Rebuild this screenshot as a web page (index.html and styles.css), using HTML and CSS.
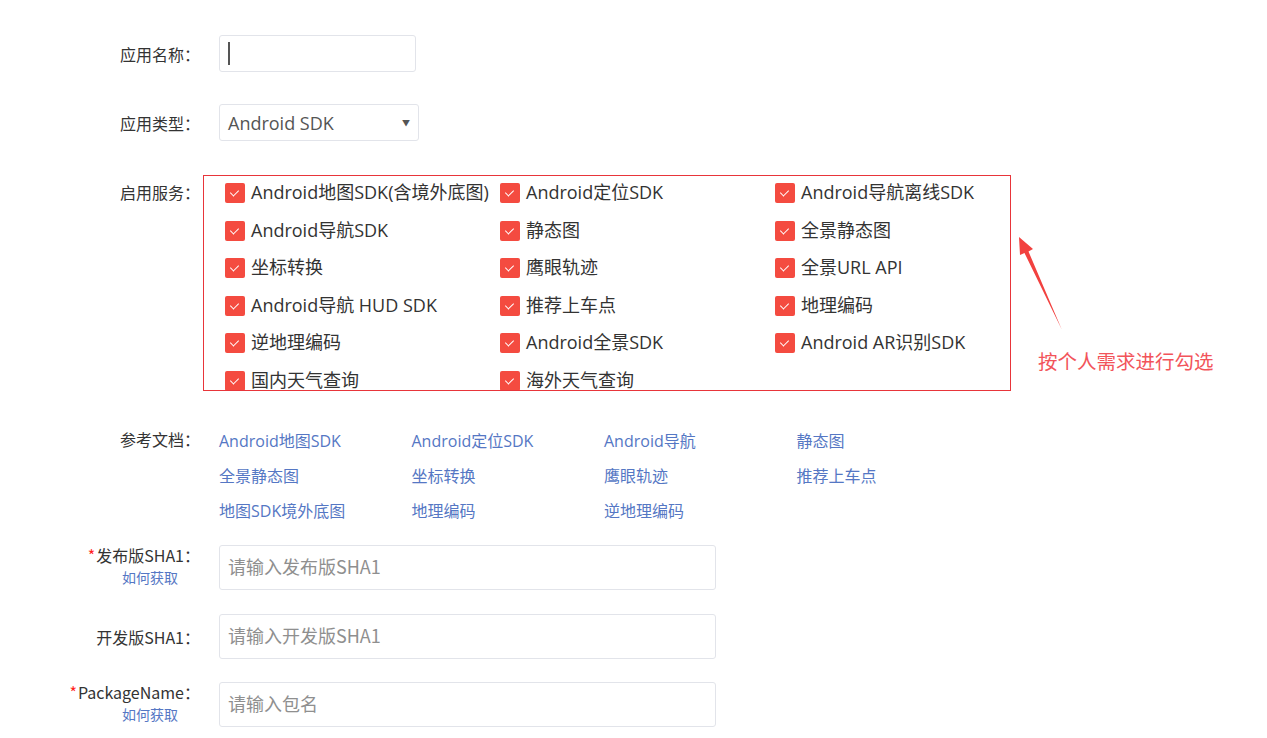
FILE: index.html
```html
<!DOCTYPE html>
<html lang="zh-CN">
<head>
<meta charset="utf-8">
<title>创建应用</title>
<link rel="stylesheet" href="styles.css">
</head>
<body>
<div class="page">
  <form class="form">
    <div class="row row-name">
      <label class="label">应用名称：</label>
      <div class="input input-name"><span class="caret"></span></div>
    </div>

    <div class="row row-type">
      <label class="label">应用类型：</label>
      <div class="select"><span class="select-text">Android SDK</span><span class="select-arrow">▼</span></div>
    </div>

    <div class="row row-services">
      <label class="label label-top">启用服务：</label>
      <div class="services">
        <div class="check"><span class="box"></span><span class="check-text">Android地图SDK(含境外底图)</span></div>
        <div class="check"><span class="box"></span><span class="check-text">Android定位SDK</span></div>
        <div class="check"><span class="box"></span><span class="check-text">Android导航离线SDK</span></div>
        <div class="check"><span class="box"></span><span class="check-text">Android导航SDK</span></div>
        <div class="check"><span class="box"></span><span class="check-text">静态图</span></div>
        <div class="check"><span class="box"></span><span class="check-text">全景静态图</span></div>
        <div class="check"><span class="box"></span><span class="check-text">坐标转换</span></div>
        <div class="check"><span class="box"></span><span class="check-text">鹰眼轨迹</span></div>
        <div class="check"><span class="box"></span><span class="check-text">全景URL API</span></div>
        <div class="check"><span class="box"></span><span class="check-text">Android导航 HUD SDK</span></div>
        <div class="check"><span class="box"></span><span class="check-text">推荐上车点</span></div>
        <div class="check"><span class="box"></span><span class="check-text">地理编码</span></div>
        <div class="check"><span class="box"></span><span class="check-text">逆地理编码</span></div>
        <div class="check"><span class="box"></span><span class="check-text">Android全景SDK</span></div>
        <div class="check"><span class="box"></span><span class="check-text">Android AR识别SDK</span></div>
        <div class="check"><span class="box"></span><span class="check-text">国内天气查询</span></div>
        <div class="check"><span class="box"></span><span class="check-text">海外天气查询</span></div>
      </div>
    </div>

    <div class="row row-docs">
      <label class="label label-docs">参考文档：</label>
      <div class="docs">
        <a class="doc">Android地图SDK</a>
        <a class="doc">Android定位SDK</a>
        <a class="doc">Android导航</a>
        <a class="doc">静态图</a>
        <a class="doc">全景静态图</a>
        <a class="doc">坐标转换</a>
        <a class="doc">鹰眼轨迹</a>
        <a class="doc">推荐上车点</a>
        <a class="doc">地图SDK境外底图</a>
        <a class="doc">地理编码</a>
        <a class="doc">逆地理编码</a>
      </div>
    </div>

    <div class="row row-sha">
      <div class="label label-stack">
        <span class="label-main"><span class="req">*</span>发布版SHA1：</span>
        <a class="how">如何获取</a>
      </div>
      <div class="input input-wide"><span class="placeholder">请输入发布版SHA1</span></div>
    </div>

    <div class="row row-dev">
      <label class="label">开发版SHA1：</label>
      <div class="input input-wide"><span class="placeholder">请输入开发版SHA1</span></div>
    </div>

    <div class="row row-pkg">
      <div class="label label-stack">
        <span class="label-main"><span class="req">*</span>PackageName：</span>
        <a class="how">如何获取</a>
      </div>
      <div class="input input-wide"><span class="placeholder">请输入包名</span></div>
    </div>
  </form>

  <div class="callout">
    <svg class="callout-arrow" width="60" height="110" viewBox="0 0 60 110">
      <polygon points="1,1 2,19 6.5,17 44,94 10.5,15.5 15,13" fill="#f2413f"/>
    </svg>
    <span class="callout-text">按个人需求进行勾选</span>
  </div>
</div>
</body>
</html>
```

FILE: styles.css
```css
html, body {
  margin: 0;
  padding: 0;
  background: #ffffff;
}

body {
  font-family: "Open Sans", "Noto Sans CJK SC", sans-serif;
  color: #333333;
}

.page {
  position: relative;
  width: 1267px;
  height: 738px;
  overflow: hidden;
}

.form {
  padding-top: 35px;
}

.row {
  display: grid;
  grid-template-columns: 203px 1fr;
  align-items: center;
}

.label {
  font-family: "Noto Sans CJK SC", sans-serif;
  font-size: 16px;
  color: #333333;
  text-align: right;
  padding-right: 3px;
  white-space: nowrap;
}

.label-top {
  align-self: start;
  margin-top: 7px;
  line-height: 20px;
}

.label-docs {
  align-self: start;
  line-height: 35px;
}

.label-stack {
  align-self: start;
  display: flex;
  flex-direction: column;
  align-items: flex-end;
}

.label-main {
  line-height: 20px;
}

.req {
  color: #ff1f1f;
  font-size: 16px;
  margin-right: 1px;
}

.how {
  font-size: 14px;
  line-height: 18px;
  margin-top: 3px;
  color: #5577c4;
  margin-right: 22px;
}

.input {
  margin-left: 16px;
  box-sizing: border-box;
  border: 1px solid #e2e4ea;
  border-radius: 3px;
  background: #fff;
  display: flex;
  align-items: center;
  padding-left: 8px;
}

.input-name {
  width: 197px;
  height: 37px;
}

.caret {
  width: 2px;
  height: 23px;
  background: #555;
}

.input-wide {
  width: 497px;
  height: 45px;
}

.placeholder {
  font-family: "Noto Sans CJK SC", sans-serif;
  font-size: 18px;
  line-height: 22px;
  margin-top: -3px;
  color: #8f8f8f;
}

.select {
  margin-left: 16px;
  box-sizing: border-box;
  width: 200px;
  height: 37px;
  border: 1px solid #e2e4ea;
  border-radius: 3px;
  display: flex;
  align-items: center;
  justify-content: space-between;
  padding: 0 8px 0 8px;
}

.select-text {
  font-size: 18px;
  color: #555;
}

.select-arrow {
  font-size: 8px;
  color: #555;
}

.row-name { margin-bottom: 32px; }
.row-type { margin-bottom: 34px; }
.row-services { margin-bottom: 31px; }
.row-docs { margin-bottom: 18px; }
.row-sha { margin-bottom: 24px; }
.row-dev { margin-bottom: 23px; }

.services {
  box-sizing: border-box;
  width: 808px;
  height: 216px;
  border: 1px solid #e8353a;
  padding: 7px 0 0 21px;
  overflow: hidden;
  display: grid;
  grid-template-columns: 275px 275px 235px;
  grid-auto-rows: 37.5px;
}

.check {
  display: flex;
  align-items: flex-start;
  gap: 6px;
  white-space: nowrap;
}

.box {
  flex: none;
  position: relative;
  width: 20px;
  height: 20px;
  border-radius: 2px;
  background: #f44b40;
}

.box::after {
  content: "";
  position: absolute;
  left: 7px;
  top: 5px;
  width: 4px;
  height: 7px;
  border-right: 1.5px solid #fff;
  border-bottom: 1.5px solid #fff;
  transform: rotate(45deg);
}

.check-text {
  font-size: 18px;
  line-height: 19px;
  color: #333;
}

.docs {
  margin-left: 16px;
  display: grid;
  grid-template-columns: repeat(4, 192.5px);
  grid-auto-rows: 35px;
  align-items: center;
}

.doc {
  font-size: 16px;
  color: #5577c4;
  white-space: nowrap;
}

.callout {
  position: absolute;
  left: 1018px;
  top: 236px;
  width: 240px;
  height: 140px;
}

.callout-arrow {
  position: absolute;
  left: 0;
  top: 0;
}

.callout-text {
  position: absolute;
  left: 20px;
  top: 110px;
  font-family: "Noto Sans CJK SC", sans-serif;
  font-size: 19.5px;
  color: #f2545a;
  white-space: nowrap;
}
```
